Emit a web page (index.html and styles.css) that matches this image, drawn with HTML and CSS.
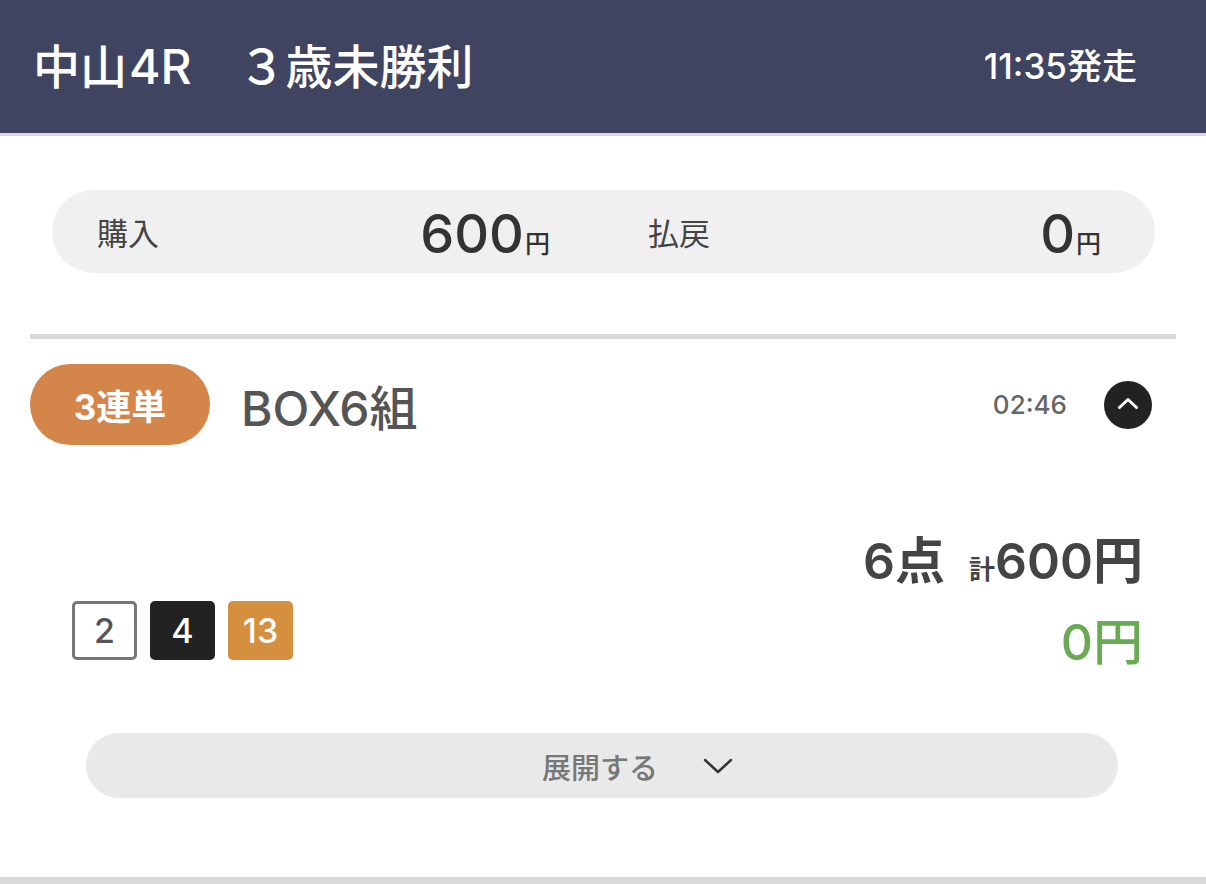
FILE: index.html
```html
<!DOCTYPE html>
<html lang="ja">
<head>
<meta charset="utf-8">
<title>中山4R ３歳未勝利</title>
<link rel="stylesheet" href="styles.css">
</head>
<body>
<header class="race-header">
  <h1 class="race-title">中山<span class="race-no">4R</span>　３歳未勝利</h1>
  <div class="race-time">11:35発走</div>
</header>
<main class="content">
  <section class="summary">
    <div class="summary-item">
      <span class="summary-label">購入</span>
      <span class="summary-value">600<span class="yen">円</span></span>
    </div>
    <div class="summary-item">
      <span class="summary-label">払戻</span>
      <span class="summary-value">0<span class="yen">円</span></span>
    </div>
  </section>
  <div class="divider"></div>
  <section class="bet">
    <div class="bet-head">
      <span class="bet-type">3連単</span>
      <span class="bet-name">BOX6組</span>
      <span class="bet-time">02:46</span>
      <span class="toggle">
        <svg width="22" height="12" viewBox="0 0 22 12"><path d="M2.5 10.5 L11 2.5 L19.5 10.5" fill="none" stroke="#fff" stroke-width="3" stroke-linecap="round" stroke-linejoin="round"/></svg>
      </span>
    </div>
    <div class="bet-body">
      <div class="horses">
        <span class="horse horse-white">2</span>
        <span class="horse horse-black">4</span>
        <span class="horse horse-orange">13</span>
      </div>
      <div class="totals">
        <div class="total-line"><span class="points">6点</span><span class="kei">計</span><span class="amount">600円</span></div>
        <div class="payout">0円</div>
      </div>
    </div>
    <button class="expand">
      <span class="expand-label">展開する</span>
      <svg width="32" height="18" viewBox="0 0 32 18"><path d="M3 3 L16 15 L29 3" fill="none" stroke="#333" stroke-width="2.5" stroke-linecap="round" stroke-linejoin="round"/></svg>
    </button>
  </section>
  <div class="bottom-line"></div>
</main>
</body>
</html>
```
FILE: styles.css
```css
* { box-sizing: border-box; }
html, body { margin: 0; padding: 0; background: #fff; }
body {
  width: 1206px;
  font-family: "Inter", "Noto Sans CJK JP", sans-serif;
  color: #444;
}
.race-header {
  height: 136px;
  background: #3f4460;
  border-bottom: 3px solid #d8dae0;
  display: flex;
  align-items: center;
  justify-content: space-between;
  padding: 0 69px 0 33px;
}
.race-title {
  margin: 0;
  color: #fff;
  font-size: 47px;
  font-weight: 500;
  line-height: 1;
}
.race-no { font-size: 48px; margin-left: 2px; }
.race-time {
  color: #fff;
  font-size: 35px;
  font-weight: 500;
  line-height: 1;
}
.content { padding-top: 54px; }
.summary {
  margin: 0 51px 0 52px;
  height: 83px;
  background: #f0f0f0;
  border-radius: 42px;
  display: grid;
  grid-template-columns: 1fr 1fr;
  column-gap: 98px;
  padding: 0 54px 0 45px;
  align-items: center;
}
.summary-item {
  display: flex;
  align-items: center;
  justify-content: space-between;
}
.summary-label {
  font-size: 31px;
  color: #444;
  font-weight: 400;
}
.summary-value {
  font-size: 54px;
  font-weight: 500;
  color: #333;
  line-height: 1;
  padding-top: 4px;
}
.yen { font-size: 25px; margin-left: 1px; }
.divider {
  margin: 61px 30px 0;
  height: 5px;
  background: #d9d9d9;
}
.bet { padding: 25px 54px 0 30px; }
.bet-head {
  display: flex;
  align-items: center;
  height: 81px;
}
.bet-type {
  width: 180px;
  height: 81px;
  border-radius: 41px;
  background: #d4854a;
  color: #fff;
  font-size: 35px;
  font-weight: 700;
  display: flex;
  align-items: center;
  justify-content: center;
}
.bet-name {
  margin-left: 31px;
  font-size: 48px;
  font-weight: 500;
  color: #555;
  flex: 1;
}
.bet-time {
  font-size: 26px;
  font-weight: 500;
  color: #666;
  margin-right: 37px;
}
.toggle {
  width: 48px;
  height: 48px;
  border-radius: 50%;
  background: #222;
  display: flex;
  align-items: center;
  justify-content: center;
  padding-bottom: 3px;
}
.bet-body {
  display: flex;
  justify-content: space-between;
  align-items: flex-end;
  margin-top: 86px;
  padding: 0 9px 0 42px;
}
.horses {
  display: flex;
  gap: 13px;
  margin-bottom: 12px;
}
.horse {
  width: 65px;
  height: 59px;
  border-radius: 5px;
  display: flex;
  align-items: center;
  justify-content: center;
  font-size: 34px;
  font-weight: 500;
}
.horse-white { border: 3px solid #777; color: #555; background: #fff; }
.horse-black { background: #222; color: #fff; }
.horse-orange { background: #d4903f; color: #fff; }
.totals { text-align: right; }
.total-line {
  display: flex;
  align-items: baseline;
  justify-content: flex-end;
  color: #444;
  font-weight: 600;
  height: 60px;
  line-height: 60px;
}
.points { font-size: 50px; }
.kei { font-size: 26px; margin-left: 24px; }
.amount { font-size: 50px; }
.payout {
  font-size: 50px;
  font-weight: 500;
  color: #6aaa55;
  line-height: 60px;
  height: 60px;
  margin-top: 21px;
}
.expand {
  display: flex;
  align-items: center;
  justify-content: center;
  gap: 44px;
  margin: 61px 34px 0 56px;
  width: calc(100% - 90px);
  height: 65px;
  border: none;
  border-radius: 33px;
  background: #e9e9e9;
  font-family: inherit;
  padding: 0 0 0 72px;
}
.expand-label {
  font-size: 29px;
  color: #777;
  font-weight: 500;
}
.bottom-line {
  margin-top: 79px;
  height: 8px;
  background: #d9d9d9;
}
```
